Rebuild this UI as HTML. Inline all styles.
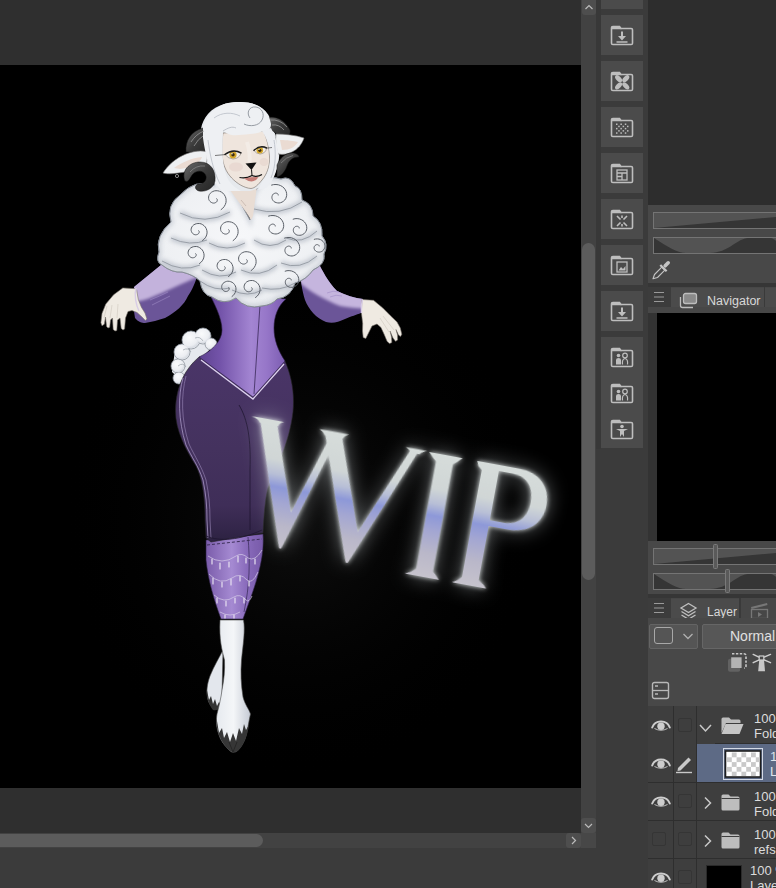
<!DOCTYPE html>
<html><head><meta charset="utf-8">
<style>
html,body{margin:0;padding:0;}
body{width:776px;height:888px;overflow:hidden;position:relative;background:#3b3b3b;font-family:"Liberation Sans",sans-serif;}
.a{position:absolute;}
</style></head><body>
<div class="a" style="left:0;top:0;width:581px;height:833px;background:#2f2f2f;"></div>
<div class="a" style="left:0;top:65px;width:581px;height:723px;background:#000;overflow:hidden;">
<svg class="a" style="left:0;top:-65px" width="581" height="888" viewBox="0 0 581 888">
<defs>
 <linearGradient id="gCorset" x1="0" y1="0" x2="1" y2="0">
  <stop offset="0" stop-color="#5e4290"/><stop offset="0.25" stop-color="#7454aa"/><stop offset="0.6" stop-color="#a385d2"/><stop offset="0.78" stop-color="#9676c8"/><stop offset="1" stop-color="#7a5bb0"/>
 </linearGradient>
 <linearGradient id="gPants" x1="0" y1="0" x2="0" y2="1">
  <stop offset="0" stop-color="#4a3568"/><stop offset="0.5" stop-color="#44325e"/><stop offset="0.8" stop-color="#3f2e58"/><stop offset="0.93" stop-color="#33264a"/><stop offset="1" stop-color="#2c2140"/>
 </linearGradient>
 <linearGradient id="gLeg" x1="0" y1="0" x2="1" y2="0">
  <stop offset="0" stop-color="#7a5caa"/><stop offset="0.45" stop-color="#a58ad2"/><stop offset="0.7" stop-color="#8a6cbc"/><stop offset="1" stop-color="#7658a8"/>
 </linearGradient>
 <linearGradient id="gHoof" x1="0" y1="0" x2="1" y2="0">
  <stop offset="0" stop-color="#e6eaef"/><stop offset="0.5" stop-color="#f4f6f8"/><stop offset="1" stop-color="#c5cad4"/>
 </linearGradient>
 <linearGradient id="gHorn" x1="0" y1="0" x2="1" y2="1">
  <stop offset="0" stop-color="#6a6a6a"/><stop offset="0.5" stop-color="#3a3a3a"/><stop offset="1" stop-color="#252525"/>
 </linearGradient>
 <radialGradient id="gBg1" cx="0.5" cy="0.5" r="0.5">
  <stop offset="0" stop-color="#141414"/><stop offset="1" stop-color="#000" stop-opacity="0"/>
 </radialGradient>
 <linearGradient id="gText" gradientUnits="userSpaceOnUse" x1="0" y1="-5" x2="0" y2="119">
  <stop offset="0" stop-color="#d6dcda"/><stop offset="0.28" stop-color="#d0d6d6"/><stop offset="0.4" stop-color="#b8bfd6"/><stop offset="0.5" stop-color="#8d98d8"/><stop offset="0.62" stop-color="#a3a6d2"/><stop offset="0.8" stop-color="#b9b7c9"/><stop offset="1" stop-color="#c6c3cc"/>
 </linearGradient>
 <filter id="glow" x="-30%" y="-30%" width="160%" height="160%">
  <feGaussianBlur in="SourceAlpha" stdDeviation="2.5" result="b1"/>
  <feFlood flood-color="#eef4f4" flood-opacity="0.9"/><feComposite in2="b1" operator="in" result="g1"/>
  <feGaussianBlur in="SourceAlpha" stdDeviation="10" result="b2"/>
  <feFlood flood-color="#d0d8dc" flood-opacity="0.55"/><feComposite in2="b2" operator="in" result="g2"/>
  <feMerge><feMergeNode in="g2"/><feMergeNode in="g1"/><feMergeNode in="SourceGraphic"/></feMerge>
 </filter>
</defs>
<ellipse cx="300" cy="520" rx="240" ry="260" fill="url(#gBg1)" opacity="0.7"/>

<!-- back leg -->
<path d="M223 650 C219 658 214 666 210 676 C207 684 206 692 208 700 C210 706 214 710 218 709 C221 707 222 702 222 695 Z" fill="#e3e7ed" stroke="#4a4a4a" stroke-width="0.6"/>
<path d="M206.5 688 C206 697 209 705 213 710 C217 711 220 709 221.5 705 L219 702 L217 706 L215 699 L213 704 L211 696 L209 700 Z" fill="#333"/>
<!-- tail -->
<radialGradient id="gTail" cx="0.4" cy="0.35" r="0.7"><stop offset="0" stop-color="#fafbfc"/><stop offset="0.7" stop-color="#eceef2"/><stop offset="1" stop-color="#cfd4dc"/></radialGradient>
<path d="M175 350 L200 332 L214 345 L200 360 L185 384 L172 372 Z" fill="#e6e9ee"/>
<circle cx="182" cy="352" r="8" fill="#e9ecf0" stroke="#8a9099" stroke-width="0.8"/><circle cx="191" cy="340" r="9" fill="#e9ecf0" stroke="#8a9099" stroke-width="0.8"/><circle cx="203" cy="336" r="8" fill="#e9ecf0" stroke="#8a9099" stroke-width="0.8"/><circle cx="211" cy="344" r="6" fill="#e9ecf0" stroke="#8a9099" stroke-width="0.8"/><circle cx="178" cy="366" r="7" fill="#e9ecf0" stroke="#8a9099" stroke-width="0.8"/><circle cx="179" cy="378" r="6" fill="#e9ecf0" stroke="#8a9099" stroke-width="0.8"/><circle cx="182" cy="352" r="7.2" fill="url(#gTail)"/><circle cx="191" cy="340" r="8.2" fill="url(#gTail)"/><circle cx="203" cy="336" r="7.2" fill="url(#gTail)"/><circle cx="211" cy="344" r="5.2" fill="url(#gTail)"/><circle cx="178" cy="366" r="6.2" fill="url(#gTail)"/><circle cx="179" cy="378" r="5.2" fill="url(#gTail)"/>
<path d="M183 350 Q188 347 191 352 M178 366 Q183 362 186 367 M195 338 Q200 336 203 341" fill="none" stroke="#9aa0a8" stroke-width="0.7"/>
<!-- leggings -->
<path d="M206 540 L263 534 C264 548 262 560 258 575 C254 590 248 605 243 619 L221 619 C214 600 208 580 206 560 Z" fill="url(#gLeg)" stroke="#2a2040" stroke-width="0.6"/>
<path d="M248 537 C250 560 250 585 244 612" fill="none" stroke="#3e3060" stroke-width="0.8"/>
<path d="M207 545 L262 539" stroke="#3c2e58" stroke-width="1" stroke-dasharray="3 2"/>
<g fill="none" stroke="#d6cce8" stroke-width="0.7">
<path d="M208 556 Q222 566 236 556 Q242 552 248 558 Q255 562 262 550"/>
<path d="M209 574 Q220 586 232 578 Q240 572 247 580 Q252 585 258 572"/>
<path d="M214 595 Q224 604 234 597 Q240 593 246 600 Q249 603 252 596"/>
<path d="M220 612 Q230 618 240 612"/>
</g>
<g stroke="#e6e0f0" stroke-width="1.2" stroke-linecap="round">
<path d="M212 559 v5 M220 563 v6 M229 562 v5 M238 556 v6 M246 558 v5 M255 559 v5 M213 578 v6 M222 582 v5 M231 579 v6 M240 576 v5 M249 581 v5 M217 598 v5 M226 601 v5 M235 598 v5 M244 598 v5 M225 615 v3 M234 615 v3"/>
</g>
<!-- front leg -->
<path d="M220 620 L243.5 620 C245.5 630 243 645 241.5 660 C240.5 672 241 685 243 697 C245 705 249 709 250.5 714 C249 720 248 728 246 736 C244 743 240 749 235.5 752 L231.5 752 C227 748 221 742 219 735 C216 727 216 720 217 714 C219 706 221 698 222 690 C224 680 225 670 224.5 660 C222 650 219 640 220 620 Z" fill="url(#gHoof)" stroke="#4a4a4a" stroke-width="0.6"/>
<path d="M216.5 718 C216 730 220 742 229 750 L233 753 L238 751 C243 746 247 738 249 725 L246 730 L244 724 L242 734 L239 728 L236 741 L233 733 L230 742 L227 732 L224 738 L222 728 L219 733 Z" fill="#363636"/>
<path d="M229 742 L233 752 L237 742" fill="none" stroke="#222" stroke-width="0.8"/>
<!-- pants -->
<path d="M199 357 C186 368 176 385 175.5 410 C175 430 186 450 196 466 C203 480 205 500 205 520 L206 538 L211 542 L263 533 C264 515 265 500 268 488 C276 470 290 440 293 412 C295 392 291 375 285 361 Z" fill="url(#gPants)" stroke="#222" stroke-width="0.6"/>
<path d="M183 378 C178 395 178 420 186 445 C192 458 198 465 203 480 C206 495 207 505 207 520 L208 538" fill="none" stroke="#b8a8d4" stroke-width="0.7"/><path d="M186 376 C181 395 181 420 189 444 C195 457 201 465 206 480 C209 495 210 505 210 520 L211 538" fill="none" stroke="#9c8abb" stroke-width="0.6"/>
<path d="M239 405 C248 420 251 440 250 470 L250 530" fill="none" stroke="#1e1530" stroke-width="0.8"/>
<path d="M206 536 C220 542 240 540 262 530" fill="none" stroke="#1e1530" stroke-width="0.8"/>
<!-- corset -->
<path d="M208 291 C214 303 222 318 222 330 C222 342 210 352 199 357 L253 397 L285 361 C278 350 274 340 274 328 C274 316 278 306 286 299 Z" fill="url(#gCorset)" stroke="#2a1d40" stroke-width="0.6"/>
<path d="M201 360 L253 399 L284 364" fill="none" stroke="#ddd2ee" stroke-width="1.3"/>
<path d="M260 305 L254 394" stroke="#3a2a58" stroke-width="0.8"/>
<!-- left sleeve -->
<filter id="fSl" x="-20%" y="-20%" width="140%" height="140%"><feGaussianBlur stdDeviation="1.6"/></filter>
<clipPath id="cSlL"><path d="M176 257 L161 265 L134 287 C133 298 133 308 135 318 C138 322 142 323 145 323 C152 322 158 320 165 318 C176 312 184 305 188 296 C192 290 196 282 198 272 Z"/></clipPath>
<clipPath id="cSlR"><path d="M300 260 L318 262 C322 270 328 282 337 291 C345 295 355 298 363 299 L361 313 C356 315 352 316 345 319 C338 322 333 324 326 322 C316 318 309 310 305 300 C302 290 300 280 300 260 Z"/></clipPath>
<path d="M176 257 L161 265 L134 287 C133 298 133 308 135 318 C138 322 142 323 145 323 C152 322 158 320 165 318 C176 312 184 305 188 296 C192 290 196 282 198 272 Z" fill="#6b5598"/>
<g clip-path="url(#cSlL)"><path d="M110 240 L200 240 L200 276 C185 282 165 292 150 298 C145 300 140 301 130 303 Z" fill="#c3b2dc" filter="url(#fSl)"/></g>
<path d="M150 300 Q160 296 168 292 M152 305 Q162 300 170 296" fill="none" stroke="#a08cc6" stroke-width="0.6"/>
<!-- right sleeve -->
<path d="M300 260 L318 262 C322 270 328 282 337 291 C345 295 355 298 363 299 L361 313 C356 315 352 316 345 319 C338 322 333 324 326 322 C316 318 309 310 305 300 C302 290 300 280 300 260 Z" fill="#6b5598"/>
<g clip-path="url(#cSlR)"><path d="M290 240 L380 240 L380 307 C370 309 355 309 340 306 C325 300 310 292 296 280 Z" fill="#c5b5de" filter="url(#fSl)"/></g>
<path d="M327 293 Q333 290 339 292 M330 297 Q336 294 342 296" fill="none" stroke="#a08cc6" stroke-width="0.6"/>
<!-- hands -->
<path d="M135.2 288.7 L122.8 287.9 L113.6 294.8 L105.8 304.1 L102.0 313.4 L100.9 322.7 L102.0 325.8 L104.3 324.2 L105.5 317.0 L106.6 326.5 L108.0 328.0 L109.7 327.3 L110.5 320.0 L112.5 318.0 L113.2 329.5 L115.0 331.0 L116.8 330.5 L117.5 320.0 L120.0 318.0 L121.2 328.5 L123.0 330.0 L124.6 329.0 L125.5 318.0 L128.0 311.5 L132.0 310.5 L137.0 312.5 L142.0 317.0 L145.3 320.4 L147.0 319.0 L145.0 313.0 L141.4 307.2 L138.3 299.5 L136.7 290.2 Z" fill="#efeae2" stroke="#7a736d" stroke-width="0.6" stroke-linejoin="round"/>
<path d="M107 306 L104 318 M112 305 L110 318 M118 304 L117 318" stroke="#cfc7bd" stroke-width="0.6"/>
<path d="M136 288 C134 295 136 305 139 311" fill="none" stroke="#d8cce6" stroke-width="1.4"/>
<path d="M361.9 299.5 L373.5 300.3 L382.8 308.0 L390.5 315.8 L397.0 322.0 L400.3 328.0 L401.8 334.3 L400.5 336.6 L398.5 335.0 L396.0 329.5 L397.5 335.0 L397.6 340.0 L395.5 341.3 L393.0 338.0 L390.0 331.0 L391.5 337.0 L391.8 342.6 L389.5 343.6 L387.2 341.5 L384.0 334.0 L381.0 327.5 L377.0 324.0 L372.0 326.0 L368.5 333.0 L365.8 338.5 L363.2 337.5 L362.5 331.0 L362.7 323.5 L361.4 312.7 Z" fill="#efeae2" stroke="#7a736d" stroke-width="0.6" stroke-linejoin="round"/>
<path d="M383 316 L394 330 M380 318 L389 332" stroke="#cfc7bd" stroke-width="0.6"/>
<path d="M362.5 299.5 C361 305 361 308 361.5 313" fill="none" stroke="#d8cce6" stroke-width="1.4"/>
<g id="wool"><filter id="fSoft" x="-20%" y="-50%" width="140%" height="200%"><feGaussianBlur stdDeviation="2"/></filter>
<radialGradient id="gWoolBase" cx="0.5" cy="0.45" r="0.6"><stop offset="0" stop-color="#f6f7f9"/><stop offset="0.8" stop-color="#eef0f3"/><stop offset="1" stop-color="#dde1e7"/></radialGradient>
<path d="M212 186 Q196 178 180 195 Q166 205 171 222 Q155 236 159 252 Q155 262 162 265 Q172 273 182 272 Q194 275 200 281 Q202 295 212 297 Q224 306 236 298 Q246 310 262 306 Q272 305 277 299 Q291 297 295 283 Q306 280 313 270 Q326 264 324 254 Q329 244 322 236 Q323 222 313 216 Q313 204 302 200 Q302 188 295 186 Q290 175 281 179 Q268 175 261 182 L254 193 L250 220 L229 182 Q222 180 212 186 Z" fill="url(#gWoolBase)" stroke="#7f858e" stroke-width="0.8"/>
<clipPath id="cWool"><path d="M212 186 Q196 178 180 195 Q166 205 171 222 Q155 236 159 252 Q155 262 162 265 Q172 273 182 272 Q194 275 200 281 Q202 295 212 297 Q224 306 236 298 Q246 310 262 306 Q272 305 277 299 Q291 297 295 283 Q306 280 313 270 Q326 264 324 254 Q329 244 322 236 Q323 222 313 216 Q313 204 302 200 Q302 188 295 186 Q290 175 281 179 Q268 175 261 182 L254 193 L250 220 L229 182 Q222 180 212 186 Z"/></clipPath><g clip-path="url(#cWool)"><g filter="url(#fSoft)" opacity="0.75">
<path d="M180 213 Q205 226 230 212" fill="none" stroke="#b4bac4" stroke-width="5"/>
<path d="M254 209 Q280 217 302 202" fill="none" stroke="#b4bac4" stroke-width="5"/>
<path d="M171 238 Q190 247 207 240" fill="none" stroke="#b4bac4" stroke-width="5"/>
<path d="M209 243 Q227 253 245 243" fill="none" stroke="#b4bac4" stroke-width="5"/>
<path d="M254 240 Q270 251 286 240" fill="none" stroke="#b4bac4" stroke-width="5"/>
<path d="M286 238 Q302 245 317 231" fill="none" stroke="#b4bac4" stroke-width="5"/>
<path d="M162 261 Q182 273 200 265" fill="none" stroke="#b4bac4" stroke-width="5"/>
<path d="M202 270 Q220 281 236 272" fill="none" stroke="#b4bac4" stroke-width="5"/>
<path d="M241 270 Q260 279 277 265" fill="none" stroke="#b4bac4" stroke-width="5"/>
<path d="M281 263 Q300 271 317 256" fill="none" stroke="#b4bac4" stroke-width="5"/>
<path d="M200 281 Q215 292 230 288" fill="none" stroke="#b4bac4" stroke-width="5"/>
<path d="M232 290 Q248 298 262 290" fill="none" stroke="#b4bac4" stroke-width="5"/>
<path d="M262 288 Q280 292 295 283" fill="none" stroke="#b4bac4" stroke-width="5"/>
<path d="M212 186 Q196 178 180 195 Q166 205 171 222 Q155 236 159 252 Q155 262 162 265 Q172 273 182 272 Q194 275 200 281 Q202 295 212 297 Q224 306 236 298 Q246 310 262 306 Q272 305 277 299 Q291 297 295 283 Q306 280 313 270 Q326 264 324 254 Q329 244 322 236 Q323 222 313 216 Q313 204 302 200 Q302 188 295 186 Q290 175 281 179 Q268 175 261 182 L254 193 L250 220 L229 182 Q222 180 212 186 Z" fill="none" stroke="#c4c9d1" stroke-width="5"/>
</g></g>
<path d="M212 186 Q196 178 180 195 Q166 205 171 222 Q155 236 159 252 Q155 262 162 265 Q172 273 182 272 Q194 275 200 281 Q202 295 212 297 Q224 306 236 298 Q246 310 262 306 Q272 305 277 299 Q291 297 295 283 Q306 280 313 270 Q326 264 324 254 Q329 244 322 236 Q323 222 313 216 Q313 204 302 200 Q302 188 295 186 Q290 175 281 179 Q268 175 261 182 L254 193 L250 220 L229 182 Q222 180 212 186 Z" fill="none" stroke="#80868f" stroke-width="0.8"/>
<path d="M180 213 Q205 226 230 212" fill="none" stroke="#8c929b" stroke-width="0.8"/>
<path d="M254 209 Q280 217 302 202" fill="none" stroke="#8c929b" stroke-width="0.8"/>
<path d="M171 238 Q190 247 207 240" fill="none" stroke="#8c929b" stroke-width="0.8"/>
<path d="M209 243 Q227 253 245 243" fill="none" stroke="#8c929b" stroke-width="0.8"/>
<path d="M254 240 Q270 251 286 240" fill="none" stroke="#8c929b" stroke-width="0.8"/>
<path d="M286 238 Q302 245 317 231" fill="none" stroke="#8c929b" stroke-width="0.8"/>
<path d="M162 261 Q182 273 200 265" fill="none" stroke="#8c929b" stroke-width="0.8"/>
<path d="M202 270 Q220 281 236 272" fill="none" stroke="#8c929b" stroke-width="0.8"/>
<path d="M241 270 Q260 279 277 265" fill="none" stroke="#8c929b" stroke-width="0.8"/>
<path d="M281 263 Q300 271 317 256" fill="none" stroke="#8c929b" stroke-width="0.8"/>
<path d="M200 281 Q215 292 230 288" fill="none" stroke="#8c929b" stroke-width="0.8"/>
<path d="M232 290 Q248 298 262 290" fill="none" stroke="#8c929b" stroke-width="0.8"/>
<path d="M262 288 Q280 292 295 283" fill="none" stroke="#8c929b" stroke-width="0.8"/>
<path d="M216.3 198.4 L216.6 198.6 L216.9 198.9 L217.1 199.2 L217.3 199.7 L217.3 200.2 L217.2 200.8 L217.0 201.4 L216.6 201.9 L216.0 202.4 L215.3 202.7 L214.5 203.0 L213.6 203.1 L212.7 203.0 L211.7 202.6 L210.8 202.1 L210.0 201.4 L209.3 200.5 L208.8 199.5 L208.6 198.3 L208.6 197.0 L208.9 195.7 L209.4 194.5 L210.3 193.3 L211.4 192.3 L212.8 191.5 L214.3 190.9 L216.0 190.7 L217.8 190.8 L219.6 191.2 L221.3 192.0 L222.9 193.1 L224.2 194.6 L225.2 196.3 L225.9 198.2 L226.1 200.3 L226.0 202.4 L225.3 204.5 L224.2 206.5 L222.7 208.3 L220.8 209.8" fill="none" stroke="#5a5f67" stroke-width="1"/>
<path d="M278.3 195.4 L278.3 195.0 L278.2 194.6 L278.1 194.2 L277.7 193.8 L277.3 193.5 L276.8 193.3 L276.1 193.1 L275.4 193.1 L274.7 193.3 L274.0 193.6 L273.3 194.0 L272.7 194.7 L272.3 195.5 L272.0 196.4 L271.9 197.4 L272.0 198.4 L272.4 199.5 L273.0 200.5 L273.8 201.4 L274.9 202.1 L276.2 202.6 L277.6 202.9 L279.1 203.0 L280.6 202.7 L282.1 202.1 L283.5 201.2 L284.7 200.1 L285.7 198.7 L286.3 197.0 L286.7 195.3 L286.6 193.4 L286.2 191.6 L285.3 189.8 L284.1 188.1 L282.5 186.7 L280.6 185.6 L278.4 184.8 L276.0 184.5 L273.6 184.6 L271.2 185.2" fill="none" stroke="#5a5f67" stroke-width="1"/>
<path d="M198.3 230.4 L198.6 230.6 L198.9 230.9 L199.1 231.2 L199.2 231.7 L199.2 232.2 L199.1 232.7 L198.8 233.2 L198.5 233.7 L197.9 234.1 L197.3 234.5 L196.5 234.7 L195.7 234.8 L194.8 234.7 L194.0 234.4 L193.2 233.9 L192.4 233.2 L191.8 232.4 L191.4 231.4 L191.1 230.3 L191.1 229.2 L191.4 228.0 L191.9 226.9 L192.7 225.8 L193.7 224.9 L195.0 224.2 L196.4 223.7 L197.9 223.5 L199.6 223.5 L201.2 223.9 L202.7 224.7 L204.1 225.7 L205.3 227.0 L206.2 228.5 L206.8 230.3 L207.1 232.1 L206.9 234.1 L206.3 236.0 L205.3 237.8 L203.9 239.4 L202.2 240.7" fill="none" stroke="#5a5f67" stroke-width="1"/>
<path d="M228.3 229.4 L228.6 229.6 L228.9 229.9 L229.1 230.2 L229.3 230.7 L229.3 231.2 L229.2 231.8 L229.0 232.4 L228.6 232.9 L228.0 233.4 L227.3 233.7 L226.5 234.0 L225.6 234.1 L224.7 234.0 L223.7 233.6 L222.8 233.1 L222.0 232.4 L221.3 231.5 L220.8 230.5 L220.6 229.3 L220.6 228.0 L220.9 226.7 L221.4 225.5 L222.3 224.3 L223.4 223.3 L224.8 222.5 L226.3 221.9 L228.0 221.7 L229.8 221.8 L231.6 222.2 L233.3 223.0 L234.9 224.1 L236.2 225.6 L237.2 227.3 L237.9 229.2 L238.1 231.3 L238.0 233.4 L237.3 235.5 L236.2 237.5 L234.7 239.3 L232.8 240.8" fill="none" stroke="#5a5f67" stroke-width="1"/>
<path d="M275.3 226.4 L275.3 226.0 L275.2 225.6 L275.1 225.2 L274.7 224.8 L274.3 224.5 L273.8 224.3 L273.1 224.1 L272.4 224.1 L271.7 224.3 L271.0 224.6 L270.3 225.0 L269.7 225.7 L269.3 226.5 L269.0 227.4 L268.9 228.4 L269.0 229.4 L269.4 230.5 L270.0 231.5 L270.8 232.4 L271.9 233.1 L273.2 233.6 L274.6 233.9 L276.1 234.0 L277.6 233.7 L279.1 233.1 L280.5 232.2 L281.7 231.1 L282.7 229.7 L283.3 228.0 L283.7 226.3 L283.6 224.4 L283.2 222.6 L282.3 220.8 L281.1 219.1 L279.5 217.7 L277.6 216.6 L275.4 215.8 L273.0 215.5 L270.6 215.6 L268.2 216.2" fill="none" stroke="#5a5f67" stroke-width="1"/>
<path d="M299.3 228.4 L299.3 228.0 L299.2 227.6 L299.0 227.3 L298.7 226.9 L298.3 226.6 L297.8 226.4 L297.2 226.3 L296.5 226.3 L295.9 226.4 L295.2 226.7 L294.6 227.2 L294.0 227.8 L293.6 228.5 L293.4 229.3 L293.3 230.3 L293.4 231.2 L293.8 232.2 L294.3 233.1 L295.1 233.9 L296.1 234.6 L297.2 235.1 L298.5 235.3 L299.9 235.3 L301.3 235.1 L302.6 234.6 L303.9 233.8 L305.0 232.7 L305.9 231.4 L306.5 230.0 L306.8 228.3 L306.7 226.7 L306.3 225.0 L305.5 223.4 L304.4 221.9 L303.0 220.6 L301.2 219.6 L299.3 218.9 L297.1 218.6 L295.0 218.7 L292.8 219.3" fill="none" stroke="#5a5f67" stroke-width="1"/>
<path d="M195.3 253.4 L195.6 253.6 L195.9 253.9 L196.1 254.2 L196.2 254.7 L196.2 255.2 L196.1 255.7 L195.8 256.2 L195.5 256.7 L194.9 257.1 L194.3 257.5 L193.5 257.7 L192.7 257.8 L191.8 257.7 L191.0 257.4 L190.2 256.9 L189.4 256.2 L188.8 255.4 L188.4 254.4 L188.1 253.3 L188.1 252.2 L188.4 251.0 L188.9 249.9 L189.7 248.8 L190.7 247.9 L192.0 247.2 L193.4 246.7 L194.9 246.5 L196.6 246.5 L198.2 246.9 L199.7 247.7 L201.1 248.7 L202.3 250.0 L203.2 251.5 L203.8 253.3 L204.1 255.1 L203.9 257.1 L203.3 259.0 L202.3 260.8 L200.9 262.4 L199.2 263.7" fill="none" stroke="#5a5f67" stroke-width="1"/>
<path d="M246.3 259.4 L246.6 259.6 L246.9 259.9 L247.1 260.2 L247.3 260.7 L247.3 261.2 L247.2 261.8 L247.0 262.4 L246.6 262.9 L246.0 263.4 L245.3 263.7 L244.5 264.0 L243.6 264.1 L242.7 264.0 L241.7 263.6 L240.8 263.1 L240.0 262.4 L239.3 261.5 L238.8 260.5 L238.6 259.3 L238.6 258.0 L238.9 256.7 L239.4 255.5 L240.3 254.3 L241.4 253.3 L242.8 252.5 L244.3 251.9 L246.0 251.7 L247.8 251.8 L249.6 252.2 L251.3 253.0 L252.9 254.1 L254.2 255.6 L255.2 257.3 L255.9 259.2 L256.1 261.3 L256.0 263.4 L255.3 265.5 L254.2 267.5 L252.7 269.3 L250.8 270.8" fill="none" stroke="#5a5f67" stroke-width="1"/>
<path d="M291.3 248.4 L291.3 248.0 L291.2 247.6 L291.1 247.2 L290.7 246.8 L290.3 246.5 L289.8 246.3 L289.1 246.1 L288.4 246.1 L287.7 246.3 L287.0 246.6 L286.3 247.0 L285.7 247.7 L285.3 248.5 L285.0 249.4 L284.9 250.4 L285.0 251.4 L285.4 252.5 L286.0 253.5 L286.8 254.4 L287.9 255.1 L289.2 255.6 L290.6 255.9 L292.1 256.0 L293.6 255.7 L295.1 255.1 L296.5 254.2 L297.7 253.1 L298.7 251.7 L299.3 250.0 L299.7 248.3 L299.6 246.4 L299.2 244.6 L298.3 242.8 L297.1 241.1 L295.5 239.7 L293.6 238.6 L291.4 237.8 L289.0 237.5 L286.6 237.6 L284.2 238.2" fill="none" stroke="#5a5f67" stroke-width="1"/>
<path d="M319.3 246.4 L319.3 246.0 L319.2 245.7 L318.9 245.4 L318.6 245.1 L318.3 244.9 L317.8 244.7 L317.3 244.6 L316.7 244.6 L316.2 244.8 L315.6 245.1 L315.1 245.5 L314.7 246.0 L314.3 246.6 L314.1 247.3 L314.1 248.0 L314.2 248.8 L314.5 249.6 L315.0 250.3 L315.7 251.0 L316.5 251.5 L317.4 251.9 L318.4 252.1 L319.5 252.1 L320.6 251.9 L321.7 251.5 L322.7 250.8 L323.6 250.0 L324.2 248.9 L324.7 247.8 L324.9 246.5 L324.9 245.2 L324.6 243.8 L323.9 242.5 L323.0 241.4 L321.9 240.4 L320.5 239.6 L319.0 239.1 L317.3 238.9 L315.6 239.0 L313.9 239.4" fill="none" stroke="#5a5f67" stroke-width="1"/>
<path d="M224.3 266.4 L224.6 266.6 L224.9 266.9 L225.1 267.2 L225.2 267.7 L225.2 268.2 L225.1 268.7 L224.8 269.2 L224.5 269.7 L223.9 270.1 L223.3 270.5 L222.5 270.7 L221.7 270.8 L220.8 270.7 L220.0 270.4 L219.2 269.9 L218.4 269.2 L217.8 268.4 L217.4 267.4 L217.1 266.3 L217.1 265.2 L217.4 264.0 L217.9 262.9 L218.7 261.8 L219.7 260.9 L221.0 260.2 L222.4 259.7 L223.9 259.5 L225.6 259.5 L227.2 259.9 L228.7 260.7 L230.1 261.7 L231.3 263.0 L232.2 264.5 L232.8 266.3 L233.1 268.1 L232.9 270.1 L232.3 272.0 L231.3 273.8 L229.9 275.4 L228.2 276.7" fill="none" stroke="#5a5f67" stroke-width="1"/>
<path d="M228.3 287.4 L228.6 287.6 L228.8 287.9 L229.0 288.2 L229.1 288.6 L229.1 289.1 L229.0 289.6 L228.7 290.1 L228.4 290.5 L227.9 290.9 L227.3 291.2 L226.6 291.4 L225.8 291.5 L225.0 291.3 L224.2 291.1 L223.5 290.6 L222.8 290.0 L222.3 289.3 L221.9 288.4 L221.7 287.4 L221.7 286.4 L221.9 285.3 L222.4 284.3 L223.1 283.3 L224.1 282.5 L225.2 281.9 L226.5 281.4 L227.8 281.2 L229.3 281.3 L230.7 281.7 L232.1 282.3 L233.4 283.2 L234.4 284.4 L235.3 285.8 L235.8 287.3 L236.0 289.0 L235.8 290.7 L235.3 292.4 L234.4 294.0 L233.2 295.5 L231.7 296.7" fill="none" stroke="#5a5f67" stroke-width="1"/>
<path d="M251.3 287.4 L251.6 287.6 L251.9 287.9 L252.1 288.2 L252.2 288.7 L252.2 289.2 L252.1 289.7 L251.8 290.2 L251.5 290.7 L250.9 291.1 L250.3 291.5 L249.5 291.7 L248.7 291.8 L247.8 291.7 L247.0 291.4 L246.2 290.9 L245.4 290.2 L244.8 289.4 L244.4 288.4 L244.1 287.3 L244.1 286.2 L244.4 285.0 L244.9 283.9 L245.7 282.8 L246.7 281.9 L248.0 281.2 L249.4 280.7 L250.9 280.5 L252.6 280.5 L254.2 280.9 L255.7 281.7 L257.1 282.7 L258.3 284.0 L259.2 285.5 L259.8 287.3 L260.1 289.1 L259.9 291.1 L259.3 293.0 L258.3 294.8 L256.9 296.4 L255.2 297.7" fill="none" stroke="#5a5f67" stroke-width="1"/>
<path d="M291.3 280.4 L291.3 280.0 L291.2 279.6 L291.0 279.3 L290.7 278.9 L290.3 278.6 L289.8 278.4 L289.2 278.3 L288.5 278.3 L287.9 278.4 L287.2 278.7 L286.6 279.2 L286.0 279.8 L285.6 280.5 L285.4 281.3 L285.3 282.3 L285.4 283.2 L285.8 284.2 L286.3 285.1 L287.1 285.9 L288.1 286.6 L289.2 287.1 L290.5 287.3 L291.9 287.3 L293.3 287.1 L294.6 286.6 L295.9 285.8 L297.0 284.7 L297.9 283.4 L298.5 282.0 L298.8 280.3 L298.7 278.7 L298.3 277.0 L297.5 275.4 L296.4 273.9 L295.0 272.6 L293.2 271.6 L291.3 270.9 L289.1 270.6 L287.0 270.7 L284.8 271.3" fill="none" stroke="#5a5f67" stroke-width="1"/>
<!-- neck -->
<path d="M227 186 L257 186 L253 216 L251 220 L246 212 Z" fill="#e9ddd4"/>
<path d="M241 200 L246 206" stroke="#b8a8a0" stroke-width="0.6"/>
<!-- hair back / side -->
<path d="M201 129 C203 118 210 108 225.6 103.6 C235 101.5 250 101 258.7 106 C264 109 268 113 270 118 C272 124 273 130 275.8 135.4 C278 142 280 150 279 158 C278 168 275 176 268 182 C262 186 255 190 250 191 L220 191 C214 185 210 176 207 166 C204 156 202 146 201 138 Z" fill="#e6e9ed"/>
<!-- horns upper -->
<path d="M186 152 C185 141 191 131 203 128 C208 128 211 132 210 138 C209 144 207 150 205 153 Z" fill="url(#gHorn)" stroke="#111" stroke-width="0.5"/>
<path d="M266 118 C276 115 285 120 290 130 C291 134 288 138 283 138 L279 138 C276 132 271 129 267 130 Z" fill="url(#gHorn)" stroke="#111" stroke-width="0.5"/>
<!-- ears -->
<path d="M163 173 C168 165 176 158 186 154 C194 151 202 150 207 152 C208 158 207 163 204 166 C197 170 188 172 178 173 C172 174 166 174 163 173 Z" fill="#eef0f2" stroke="#777" stroke-width="0.6"/>
<path d="M174 168 C182 162 192 158 202 157 C200 163 192 167 180 169 Z" fill="#eadbd2"/>
<path d="M276 134 C285 134 295 135 304 138 C302 144 298 149 292 152 C288 154 283 155 278 154 C276 148 275 140 276 134 Z" fill="#eef0f2" stroke="#777" stroke-width="0.6"/>
<path d="M280 140 C287 140 294 141 298 142 C295 147 290 150 282 150 Z" fill="#eadbd2"/>
<!-- face -->
<path d="M223 133 L263.6 131 C267 139 269.5 148 269.7 159 C269.5 167 267 174 262 180 C258 185 255 188 251 188.5 C244 188 237 183.5 231.7 178 C226 172 223 165 222 155 C221.5 147 222 139 223 133 Z" fill="#efe5dd" stroke="#6e6660" stroke-width="0.6"/>
<ellipse cx="236" cy="167" rx="7" ry="4.5" fill="#e4cfc8" opacity="0.55"/>
<ellipse cx="264" cy="162" rx="4.5" ry="4" fill="#e4cfc8" opacity="0.5"/>
<path d="M247 142 C249.5 150 250 157 249.5 162" fill="none" stroke="#f5f0ea" stroke-width="4" opacity="0.7"/>
<!-- bangs -->
<path d="M203 127 C207 114 216 106 228 103 C240 101 252 102 260 107 C266 111 270 117 271 124 C271 129 268 131 263 131 C258 133 254 134 250 134 C242 135 236 135.5 231.7 135 C228 134 225 132.5 223 131 C223 140 222 150 223 160 C224 170 226 176 229 181 C233 186 237 189 241 191 L222 191 C216 185 212 176 209 166 C206 156 204 146 203 138 Z" fill="#eef0f3"/>
<path d="M262 131 C267 138 270 148 270 158 C270 168 267 176 262 182 L258 190 L266 188 C273 182 277 172 278 160 C279 148 276 138 271 128 Z" fill="#eceef2"/>
<path d="M250 118 C246 113 249 106 256 107 C262 108 265 114 262 120 C259 126 250 127 244 124" fill="none" stroke="#8c929a" stroke-width="0.9"/>
<path d="M214 118 C222 112 232 112 240 116 M208 140 C210 155 213 170 220 184 M274 140 C276 152 276 166 271 178" fill="none" stroke="#b9bec6" stroke-width="0.8"/>
<path d="M223 131 C228 128 232 126 236 128" fill="none" stroke="#a9aeb6" stroke-width="0.7"/>
<!-- eyes -->
<path d="M215 155.5 L226 154.5" stroke="#444" stroke-width="0.7"/>
<path d="M225 154.5 Q233 148.5 241 153.5 Q239 158.5 233 159 Q228 158.5 225 154.5 Z" fill="#f4efe8" stroke="#6a625c" stroke-width="0.5"/>
<circle cx="233" cy="154.8" r="3.6" fill="#d2a629"/>
<circle cx="233" cy="154.8" r="1.7" fill="#3a2a10"/>
<circle cx="232" cy="153.8" r="0.7" fill="#fff"/>
<path d="M224.5 154.8 Q233 148 241.5 153.2" fill="none" stroke="#1c1c1c" stroke-width="1.4"/>
<path d="M264 148.5 L272 147.5" stroke="#444" stroke-width="0.7"/>
<path d="M254 150.5 Q260 145 266.5 148.5 Q265.5 153.5 260 154 Q256 153.5 254 150.5 Z" fill="#f4efe8" stroke="#6a625c" stroke-width="0.5"/>
<circle cx="259.8" cy="150.3" r="3.3" fill="#d2a629"/>
<circle cx="259.8" cy="150.3" r="1.6" fill="#3a2a10"/>
<circle cx="259" cy="149.4" r="0.6" fill="#fff"/>
<path d="M253.5 150.8 Q260 144.5 267 148.2" fill="none" stroke="#1c1c1c" stroke-width="1.4"/>
<!-- nose & mouth -->
<path d="M245.5 163.5 L256.5 162.5 L251.5 170 Z" fill="#111"/>
<path d="M251.5 169.5 L252 175.5" stroke="#111" stroke-width="1"/>
<path d="M239.5 177.5 Q246 179 252 175.5 Q257 177.5 262 174.5" fill="none" stroke="#111" stroke-width="1.2"/>
<path d="M244 178.5 Q252 176.8 258.5 177.2 Q253 185 244 178.5 Z" fill="#c47c76"/>
<!-- horns lower -->
<path d="M185 181 C181 171 189 162 200 162 C211 162 216 171 215 181 C213 189 206 192 199 191 C195 190 194 186 198 184 C203 184 207 181 206 176 C204 170 197 170 193 174 C190 177 189 183 185 181 Z" fill="url(#gHorn)" stroke="#111" stroke-width="0.5"/>
<path d="M277 165 C280 158 285 153 292 153 C296 153 299 155 299 157 C293 157 289 160 287 166 C285 172 281 176 277 177 Z" fill="url(#gHorn)" stroke="#111" stroke-width="0.5"/>
<circle cx="177" cy="176" r="1.6" fill="none" stroke="#bbb" stroke-width="0.7"/>
<path d="M191 142 Q196 134 204 131 M194 146 Q198 139 203 136" fill="none" stroke="#a0a0a0" stroke-width="0.9" opacity="0.8"/>
<path d="M270 120 Q280 119 287 127 M272 125 Q279 124 284 130" fill="none" stroke="#a0a0a0" stroke-width="0.9" opacity="0.8"/>
<path d="M190 172 Q196 165 205 166 M281 163 Q286 157 293 155.5" fill="none" stroke="#8a8a8a" stroke-width="0.9" opacity="0.8"/>
</g>
<!-- WIP -->
<g transform="translate(445,460) rotate(10.5)" filter="url(#glow)" fill="url(#gText)">
 <path d="M-188 -3 L-171 -3 L-141.9 79.8 L-116 -6 L-109 -6 L-145 117 L-147 117 Z M-122 -2.5 L-105 -2.5 L-72.7 86.7 L-35 -5 L-27 -5 L-77 119 L-79 119 Z M-198 -8 L-165 -8 Q-170 -6 -170 -3 L-189 -3 Q-190 -6 -198 -8 Z M-129 -7.5 L-99 -7.5 Q-104 -5 -104 -2.5 L-123 -2.5 Q-124 -5 -129 -7.5 Z M-41 -5.5 L-19 -5.5 Q-25 -3.5 -26 -1 L-35 -1 Q-36 -3.5 -41 -5.5 Z"/>
 <path d="M-17 -5 L17 -5 L12 0 L8.5 3 L8.5 112 L13 116 L16 119 L-19 119 L-13 116 L-8.5 112 L-8.5 3 L-12 0 Z"/>
 <path transform="translate(4,0)" d="M28 -5 L70 -5 C92 -5 104 8 104 26 C104 45 91 57 69 57 L51 57 L51 112 L57 116 L60 119 L25 119 L30 116 L34 112 L34 3 L30 0 Z M51 1 L51 51 L64 51 C80 51 88 41 88 26 C88 12 81 1 65 1 Z" fill-rule="evenodd"/>
</g>
</svg>

</div>
<div class="a" style="left:581px;top:0;width:15px;height:833px;background:#424242;"></div>
<div class="a" style="left:582px;top:0;width:14px;height:15px;background:#4e4e4e;border-radius:0 0 3px 3px;"></div>
<svg class="a" style="left:582px;top:0" width="14" height="15"><path d="M3.5 9 L7 5.5 L10.5 9" fill="none" stroke="#bbb" stroke-width="1.2"/></svg>
<div class="a" style="left:582px;top:243px;width:13px;height:337px;background:#5c5c5c;border-radius:7px;"></div>
<div class="a" style="left:581px;top:818px;width:15px;height:15px;background:#4e4e4e;border-radius:3px;"></div>
<svg class="a" style="left:581px;top:818px" width="15" height="15"><path d="M4 6 L7.5 9.5 L11 6" fill="none" stroke="#bbb" stroke-width="1.2"/></svg>
<div class="a" style="left:0;top:833px;width:596px;height:15px;background:#424242;"></div>
<div class="a" style="left:0;top:834px;width:263px;height:13px;background:#5c5c5c;border-radius:0 7px 7px 0;"></div>
<div class="a" style="left:566px;top:833px;width:15px;height:15px;background:#4e4e4e;border-radius:3px;"></div>
<svg class="a" style="left:566px;top:833px" width="15" height="15"><path d="M6 4 L9.5 7.5 L6 11" fill="none" stroke="#bbb" stroke-width="1.2"/></svg>
<div class="a" style="left:581px;top:833px;width:15px;height:15px;background:#474747;"></div>
<div class="a" style="left:596px;top:0;width:52px;height:888px;background:#3b3b3b;"></div>
<div class="a" style="left:596px;top:0;width:5px;height:449px;background:#383838;"></div>
<div class="a" style="left:601px;top:-31px;width:42px;height:40px;background:#4b4b4b;"></div>
<div class="a" style="left:601px;top:15px;width:42px;height:40px;background:#4b4b4b;"><svg width="26" height="22" viewBox="0 0 26 22" style="position:absolute;left:8px;top:9px"><path d="M2.5 3.8 Q2.5 2.5 3.8 2.5 L10.5 2.5 L12 4.5 L22.2 4.5 Q23.5 4.5 23.5 5.8 L23.5 19.2 Q23.5 20.5 22.2 20.5 L3.8 20.5 Q2.5 20.5 2.5 19.2 Z" fill="none" stroke="#bebebe" stroke-width="1.6"/><path d="M2.6 3.4 Q2.6 2.2 3.8 2.2 L10.3 2.2 L12.6 5.2 L2.6 5.2Z" fill="#bebebe"/><path d="M13 7.5 V14" stroke="#bebebe" stroke-width="2"/><path d="M9 12 L13 16.5 L17 12Z" fill="#bebebe"/><path d="M7.5 18 H18.5" stroke="#bebebe" stroke-width="1.5"/></svg></div>
<div class="a" style="left:601px;top:61px;width:42px;height:40px;background:#4b4b4b;"><svg width="26" height="22" viewBox="0 0 26 22" style="position:absolute;left:8px;top:9px"><path d="M2.5 3.8 Q2.5 2.5 3.8 2.5 L10.5 2.5 L12 4.5 L22.2 4.5 Q23.5 4.5 23.5 5.8 L23.5 19.2 Q23.5 20.5 22.2 20.5 L3.8 20.5 Q2.5 20.5 2.5 19.2 Z" fill="none" stroke="#bebebe" stroke-width="1.6"/><path d="M2.6 3.4 Q2.6 2.2 3.8 2.2 L10.3 2.2 L12.6 5.2 L2.6 5.2Z" fill="#bebebe"/><ellipse cx="16.80" cy="15.90" rx="4.3" ry="2.4" transform="rotate(45 16.80 15.90)" fill="#bebebe"/><ellipse cx="9.60" cy="8.70" rx="4.3" ry="2.4" transform="rotate(45 9.60 8.70)" fill="#bebebe"/><ellipse cx="16.80" cy="8.70" rx="4.3" ry="2.4" transform="rotate(-45 16.80 8.70)" fill="#bebebe"/><ellipse cx="9.60" cy="15.90" rx="4.3" ry="2.4" transform="rotate(-45 9.60 15.90)" fill="#bebebe"/></svg></div>
<div class="a" style="left:601px;top:107px;width:42px;height:40px;background:#4b4b4b;"><svg width="26" height="22" viewBox="0 0 26 22" style="position:absolute;left:8px;top:9px"><path d="M2.5 3.8 Q2.5 2.5 3.8 2.5 L10.5 2.5 L12 4.5 L22.2 4.5 Q23.5 4.5 23.5 5.8 L23.5 19.2 Q23.5 20.5 22.2 20.5 L3.8 20.5 Q2.5 20.5 2.5 19.2 Z" fill="none" stroke="#bebebe" stroke-width="1.6"/><path d="M2.6 3.4 Q2.6 2.2 3.8 2.2 L10.3 2.2 L12.6 5.2 L2.6 5.2Z" fill="#bebebe"/><rect x="7.0" y="7.5" width="1.5" height="1.5" fill="#bebebe"/><rect x="7.0" y="11.9" width="1.5" height="1.5" fill="#bebebe"/><rect x="7.0" y="16.3" width="1.5" height="1.5" fill="#bebebe"/><rect x="9.2" y="9.7" width="1.5" height="1.5" fill="#bebebe"/><rect x="9.2" y="14.100000000000001" width="1.5" height="1.5" fill="#bebebe"/><rect x="11.4" y="7.5" width="1.5" height="1.5" fill="#bebebe"/><rect x="11.4" y="11.9" width="1.5" height="1.5" fill="#bebebe"/><rect x="11.4" y="16.3" width="1.5" height="1.5" fill="#bebebe"/><rect x="13.600000000000001" y="9.7" width="1.5" height="1.5" fill="#bebebe"/><rect x="13.600000000000001" y="14.100000000000001" width="1.5" height="1.5" fill="#bebebe"/><rect x="15.8" y="7.5" width="1.5" height="1.5" fill="#bebebe"/><rect x="15.8" y="11.9" width="1.5" height="1.5" fill="#bebebe"/><rect x="15.8" y="16.3" width="1.5" height="1.5" fill="#bebebe"/><rect x="18.0" y="9.7" width="1.5" height="1.5" fill="#bebebe"/><rect x="18.0" y="14.100000000000001" width="1.5" height="1.5" fill="#bebebe"/></svg></div>
<div class="a" style="left:601px;top:153px;width:42px;height:40px;background:#4b4b4b;"><svg width="26" height="22" viewBox="0 0 26 22" style="position:absolute;left:8px;top:9px"><path d="M2.5 3.8 Q2.5 2.5 3.8 2.5 L10.5 2.5 L12 4.5 L22.2 4.5 Q23.5 4.5 23.5 5.8 L23.5 19.2 Q23.5 20.5 22.2 20.5 L3.8 20.5 Q2.5 20.5 2.5 19.2 Z" fill="none" stroke="#bebebe" stroke-width="1.6"/><path d="M2.6 3.4 Q2.6 2.2 3.8 2.2 L10.3 2.2 L12.6 5.2 L2.6 5.2Z" fill="#bebebe"/><rect x="8" y="8" width="10" height="10" fill="none" stroke="#bebebe" stroke-width="1.3"/><path d="M8 11 H18 M8 14.5 H13 M13 11 V18" stroke="#bebebe" stroke-width="1.3"/></svg></div>
<div class="a" style="left:601px;top:199px;width:42px;height:40px;background:#4b4b4b;"><svg width="26" height="22" viewBox="0 0 26 22" style="position:absolute;left:8px;top:9px"><path d="M2.5 3.8 Q2.5 2.5 3.8 2.5 L10.5 2.5 L12 4.5 L22.2 4.5 Q23.5 4.5 23.5 5.8 L23.5 19.2 Q23.5 20.5 22.2 20.5 L3.8 20.5 Q2.5 20.5 2.5 19.2 Z" fill="none" stroke="#bebebe" stroke-width="1.6"/><path d="M2.6 3.4 Q2.6 2.2 3.8 2.2 L10.3 2.2 L12.6 5.2 L2.6 5.2Z" fill="#bebebe"/><path d="M8 8 L11.5 11.5 M18 8 L14.5 11.5 M8 18 L11.5 14.5 M18 18 L14.5 14.5 M13 7.5 V10 M13 16 V18.5" stroke="#bebebe" stroke-width="1.6"/></svg></div>
<div class="a" style="left:601px;top:245px;width:42px;height:40px;background:#4b4b4b;"><svg width="26" height="22" viewBox="0 0 26 22" style="position:absolute;left:8px;top:9px"><path d="M2.5 3.8 Q2.5 2.5 3.8 2.5 L10.5 2.5 L12 4.5 L22.2 4.5 Q23.5 4.5 23.5 5.8 L23.5 19.2 Q23.5 20.5 22.2 20.5 L3.8 20.5 Q2.5 20.5 2.5 19.2 Z" fill="none" stroke="#bebebe" stroke-width="1.6"/><path d="M2.6 3.4 Q2.6 2.2 3.8 2.2 L10.3 2.2 L12.6 5.2 L2.6 5.2Z" fill="#bebebe"/><rect x="8" y="8" width="10" height="10" fill="none" stroke="#bebebe" stroke-width="1.3"/><path d="M9.5 16.5 L12 13 L14 15 L16.5 12 V16.5Z" fill="#bebebe"/></svg></div>
<div class="a" style="left:601px;top:291px;width:42px;height:40px;background:#4b4b4b;"><svg width="26" height="22" viewBox="0 0 26 22" style="position:absolute;left:8px;top:9px"><path d="M2.5 3.8 Q2.5 2.5 3.8 2.5 L10.5 2.5 L12 4.5 L22.2 4.5 Q23.5 4.5 23.5 5.8 L23.5 19.2 Q23.5 20.5 22.2 20.5 L3.8 20.5 Q2.5 20.5 2.5 19.2 Z" fill="none" stroke="#bebebe" stroke-width="1.6"/><path d="M2.6 3.4 Q2.6 2.2 3.8 2.2 L10.3 2.2 L12.6 5.2 L2.6 5.2Z" fill="#bebebe"/><path d="M13 7.5 V14" stroke="#bebebe" stroke-width="2"/><path d="M9 12 L13 16.5 L17 12Z" fill="#bebebe"/><path d="M7.5 18 H18.5" stroke="#bebebe" stroke-width="1.5"/></svg></div>
<div class="a" style="left:601px;top:337px;width:42px;height:111px;background:#4b4b4b;">
<svg width="26" height="22" viewBox="0 0 26 22" style="position:absolute;left:8px;top:9px"><path d="M2.5 3.8 Q2.5 2.5 3.8 2.5 L10.5 2.5 L12 4.5 L22.2 4.5 Q23.5 4.5 23.5 5.8 L23.5 19.2 Q23.5 20.5 22.2 20.5 L3.8 20.5 Q2.5 20.5 2.5 19.2 Z" fill="none" stroke="#bebebe" stroke-width="1.6"/><path d="M2.6 3.4 Q2.6 2.2 3.8 2.2 L10.3 2.2 L12.6 5.2 L2.6 5.2Z" fill="#bebebe"/><circle cx="9.5" cy="9.5" r="1.8" fill="#bebebe"/><path d="M7 18.5 V14 Q7 12 9.5 12 Q12 12 12 14 V18.5Z" fill="#bebebe"/><circle cx="16" cy="9.5" r="2.3" fill="none" stroke="#bebebe" stroke-width="1.2"/><path d="M13.5 18.5 Q12.8 13 16 12.5 Q19.2 13 18.5 18.5" fill="none" stroke="#bebebe" stroke-width="1.2"/></svg>
<svg width="26" height="22" viewBox="0 0 26 22" style="position:absolute;left:8px;top:45px"><path d="M2.5 3.8 Q2.5 2.5 3.8 2.5 L10.5 2.5 L12 4.5 L22.2 4.5 Q23.5 4.5 23.5 5.8 L23.5 19.2 Q23.5 20.5 22.2 20.5 L3.8 20.5 Q2.5 20.5 2.5 19.2 Z" fill="none" stroke="#bebebe" stroke-width="1.6"/><path d="M2.6 3.4 Q2.6 2.2 3.8 2.2 L10.3 2.2 L12.6 5.2 L2.6 5.2Z" fill="#bebebe"/><circle cx="9.5" cy="9.5" r="1.8" fill="#bebebe"/><path d="M7 18.5 V14 Q7 12 9.5 12 Q12 12 12 14 V18.5Z" fill="#bebebe"/><circle cx="16" cy="9.5" r="2.3" fill="none" stroke="#bebebe" stroke-width="1.2"/><path d="M13.5 18.5 Q12.8 13 16 12.5 Q19.2 13 18.5 18.5" fill="none" stroke="#bebebe" stroke-width="1.2"/></svg>
<svg width="26" height="22" viewBox="0 0 26 22" style="position:absolute;left:8px;top:81px"><path d="M2.5 3.8 Q2.5 2.5 3.8 2.5 L10.5 2.5 L12 4.5 L22.2 4.5 Q23.5 4.5 23.5 5.8 L23.5 19.2 Q23.5 20.5 22.2 20.5 L3.8 20.5 Q2.5 20.5 2.5 19.2 Z" fill="none" stroke="#bebebe" stroke-width="1.6"/><path d="M2.6 3.4 Q2.6 2.2 3.8 2.2 L10.3 2.2 L12.6 5.2 L2.6 5.2Z" fill="#bebebe"/><circle cx="13" cy="8.5" r="1.8" fill="#bebebe"/><path d="M7 11 L19 11 L15 13 V19 L13 16 L11 19 V13Z" fill="#bebebe"/></svg>
</div><!-- right dark area -->
<div class="a" style="left:648px;top:0;width:128px;height:888px;background:#2d2d2d;"></div>
<div class="a" style="left:648px;top:313px;width:9px;height:228px;background:#333;"></div>
<!-- color slider panel -->
<div class="a" style="left:648px;top:205px;width:128px;height:78px;background:#484848;"></div>
<svg class="a" style="left:648px;top:205px" width="128" height="78">
 <rect x="5.5" y="7.5" width="130" height="16" fill="#535353" stroke="#747474" stroke-width="1"/>
 <path d="M6 23 L128 12 L128 23Z" fill="#353535"/>
 <rect x="5.5" y="32.5" width="130" height="16" fill="#535353" stroke="#747474" stroke-width="1"/>
 <path d="M6 33 C20 42 30 48 38 48 L62 48 C80 48 90 33 100 33 L122 33 C125 33 127 35 128 36 L128 48 L6 48Z" fill="#353535"/>
 <path d="M5 73.8 L6.5 69.5 L13.8 62.2 L16.8 65.2 L9.5 72.5 Z" fill="none" stroke="#c4c4c4" stroke-width="1.1" stroke-linejoin="round"/>
<path d="M12.3 60 L18.6 66.3" stroke="#c4c4c4" stroke-width="2.2"/>
<path d="M17.2 60.8 L20.2 57.8" stroke="#c4c4c4" stroke-width="3.6" stroke-linecap="round"/>
</svg>
<!-- navigator tab bar -->
<div class="a" style="left:648px;top:283px;width:128px;height:4px;background:#363636;"></div>
<div class="a" style="left:648px;top:287px;width:128px;height:26px;background:#474747;"></div>
<div class="a" style="left:648px;top:287px;width:23px;height:20px;background:#3c3c3c;"></div>
<svg class="a" style="left:653px;top:291px" width="12" height="12"><path d="M1 1.5H11M1 6H11M1 10.5H11" stroke="#9a9a9a" stroke-width="1"/></svg>
<div class="a" style="left:671px;top:288px;width:93px;height:19px;background:#4b4b4b;"></div>
<div class="a" style="left:764px;top:287px;width:1px;height:20px;background:#3a3a3a;"></div>
<div class="a" style="left:765px;top:288px;width:11px;height:19px;background:#4b4b4b;"></div>
<svg class="a" style="left:679px;top:292px" width="20" height="18"><rect x="4.5" y="1.5" width="13" height="10" rx="2" fill="#8a8a8a" stroke="#bdbdbd" stroke-width="1.3"/><path d="M1.5 5 V13.5 Q1.5 15.5 3.5 15.5 H14" fill="none" stroke="#bdbdbd" stroke-width="1.3"/></svg>
<div class="a" style="left:707px;top:293px;font-size:12.5px;color:#d8d8d8;line-height:16px;">Navigator</div>
<div class="a" style="left:657px;top:313px;width:119px;height:228px;background:#000;"></div>
<!-- nav slider panel -->
<div class="a" style="left:648px;top:541px;width:128px;height:53px;background:#484848;"></div>
<svg class="a" style="left:648px;top:541px" width="128" height="53">
 <rect x="5.5" y="7.5" width="130" height="16" fill="#535353" stroke="#747474" stroke-width="1"/>
 <path d="M6 23 L128 12 L128 23Z" fill="#353535"/>
 <rect x="5.5" y="32.5" width="130" height="16" fill="#535353" stroke="#747474" stroke-width="1"/>
 <path d="M6 33 C20 42 30 48 38 48 L62 48 C80 48 90 33 100 33 L122 33 C125 33 127 35 128 36 L128 48 L6 48Z" fill="#353535"/>
 <rect x="65.5" y="3.5" width="4" height="24" rx="1" fill="#5a5a5a" stroke="#7a7a7a"/>
 <rect x="77.5" y="28.5" width="4" height="23" rx="1" fill="#5a5a5a" stroke="#7a7a7a"/>
</svg>
<!-- layer tab bar -->
<div class="a" style="left:648px;top:594px;width:128px;height:4px;background:#363636;"></div>
<div class="a" style="left:648px;top:598px;width:128px;height:20px;background:#474747;"></div>
<div class="a" style="left:648px;top:598px;width:23px;height:20px;background:#3c3c3c;"></div>
<svg class="a" style="left:653px;top:602px" width="12" height="12"><path d="M1 1.5H11M1 6H11M1 10.5H11" stroke="#9a9a9a" stroke-width="1"/></svg>
<div class="a" style="left:671px;top:599px;width:68px;height:19px;background:#4b4b4b;"></div>
<div class="a" style="left:739px;top:598px;width:2px;height:20px;background:#3a3a3a;"></div>
<div class="a" style="left:741px;top:599px;width:35px;height:19px;background:#474747;"></div>
<svg class="a" style="left:679px;top:602px" width="20" height="21"><path d="M9.5 1.5 L17 6 L9.5 10.5 L2 6Z" fill="none" stroke="#c0c0c0" stroke-width="1.3"/><path d="M2.5 9.5 L9.5 13.8 L16.5 9.5 M2.5 13 L9.5 17.3 L16.5 13" fill="none" stroke="#c0c0c0" stroke-width="1.3"/></svg>
<div class="a" style="left:707px;top:604px;font-size:12px;color:#d8d8d8;line-height:16px;">Layer</div>
<svg class="a" style="left:749px;top:601px" width="22" height="18"><path d="M2 6 L18 2 L18.5 4 L2.5 8Z" fill="#777"/><rect x="2.5" y="8.5" width="16" height="9" fill="none" stroke="#777" stroke-width="1.3"/><path d="M9 11 L13 13.5 L9 16Z" fill="#777"/></svg>
<!-- layer toolbar -->
<div class="a" style="left:648px;top:618px;width:128px;height:88px;background:#484848;"></div>
<div class="a" style="left:649px;top:624px;width:47px;height:23px;background:#555;border:1px solid #646464;border-radius:2px;"></div>
<div class="a" style="left:654px;top:627px;width:17px;height:15px;border:1.6px solid #a8a8a8;border-radius:3px;"></div>
<svg class="a" style="left:682px;top:631px" width="14" height="10"><path d="M1.5 3 L6 7.5 L10.5 3" fill="none" stroke="#b0b0b0" stroke-width="1.3"/></svg>
<div class="a" style="left:702px;top:624px;width:80px;height:23px;background:#575757;border:1px solid #666;border-radius:2px;"></div>
<div class="a" style="left:730px;top:627px;font-size:14px;color:#e0e0e0;line-height:18px;">Normal</div>
<svg class="a" style="left:727px;top:652px" width="48" height="22">
 <rect x="1" y="6.7" width="12.2" height="13" rx="2" fill="#626262"/>
 <path d="M4.2 5.3 H14.6 V16 H4.2Z" fill="#b4b4b4"/>
 <path d="M5 1.8 H17 Q19 1.8 19 3.8 V14 Q19 16 17 16" fill="none" stroke="#c8c8c8" stroke-width="1.6" stroke-dasharray="2.4 1.5"/>
 <path d="M34.5 6.3 L26.2 2.4 M34.5 6.3 L43.5 2.4 M34.5 6.8 L26.2 10.7 M34.5 6.8 L43.5 10.7" stroke="#cfcfcf" stroke-width="1.4" stroke-linecap="round"/>
 <path d="M32.3 7.4 L37 7.4 L38 19.3 L31.2 19.3Z" fill="#c8c8c8"/>
 <rect x="32.2" y="4" width="4.6" height="4" fill="#484848" stroke="#cfcfcf" stroke-width="1.2"/>
</svg>
<svg class="a" style="left:651px;top:681px" width="20" height="20"><rect x="1.5" y="1.5" width="16" height="16" rx="2" fill="none" stroke="#b8b8b8" stroke-width="1.4"/><path d="M1.5 9.5 H17.5" stroke="#b8b8b8" stroke-width="1.3"/><path d="M4 5 H7 M4 13 H7" stroke="#b8b8b8" stroke-width="1.3"/></svg>
<!-- layer list -->
<div class="a" style="left:648px;top:706px;width:128px;height:182px;background:#3e3e3e;"></div>
<div class="a" style="left:696px;top:744px;width:80px;height:38px;background:#5d6a85;"></div>
<div class="a" style="left:673px;top:706px;width:1px;height:182px;background:#2e2e2e;"></div>
<div class="a" style="left:696px;top:706px;width:1px;height:182px;background:#2e2e2e;"></div>
<div class="a" style="left:715px;top:743px;width:61px;height:1px;background:#2e2e2e;"></div>
<div class="a" style="left:648px;top:782px;width:128px;height:1px;background:#2e2e2e;"></div>
<div class="a" style="left:648px;top:820px;width:128px;height:1px;background:#2e2e2e;"></div>
<div class="a" style="left:648px;top:858px;width:128px;height:1px;background:#2e2e2e;"></div>
<svg class="a" style="left:651px;top:717px" width="22" height="16"><path d="M1.2 10.5 C4 2.5 16 2.5 18.8 10.5" fill="none" stroke="#cdcdcd" stroke-width="2" stroke-linecap="round"/><path d="M3.5 11.5 Q10 15 16.5 11.5" fill="none" stroke="#cdcdcd" stroke-width="0.9"/><circle cx="10" cy="9.3" r="3.7" fill="#cdcdcd"/></svg>
<div class="a" style="left:678px;top:718px;width:12px;height:12px;border:1.5px solid #353535;border-radius:2px;"></div>
<svg class="a" style="left:651px;top:755px" width="22" height="16"><path d="M1.2 10.5 C4 2.5 16 2.5 18.8 10.5" fill="none" stroke="#cdcdcd" stroke-width="2" stroke-linecap="round"/><path d="M3.5 11.5 Q10 15 16.5 11.5" fill="none" stroke="#cdcdcd" stroke-width="0.9"/><circle cx="10" cy="9.3" r="3.7" fill="#cdcdcd"/></svg>
<svg class="a" style="left:651px;top:793px" width="22" height="16"><path d="M1.2 10.5 C4 2.5 16 2.5 18.8 10.5" fill="none" stroke="#cdcdcd" stroke-width="2" stroke-linecap="round"/><path d="M3.5 11.5 Q10 15 16.5 11.5" fill="none" stroke="#cdcdcd" stroke-width="0.9"/><circle cx="10" cy="9.3" r="3.7" fill="#cdcdcd"/></svg>
<div class="a" style="left:678px;top:794px;width:12px;height:12px;border:1.5px solid #353535;border-radius:2px;"></div>
<div class="a" style="left:652px;top:832px;width:12px;height:12px;border:1.5px solid #353535;border-radius:2px;"></div>
<div class="a" style="left:678px;top:832px;width:12px;height:12px;border:1.5px solid #353535;border-radius:2px;"></div>
<svg class="a" style="left:651px;top:869px" width="22" height="16"><path d="M1.2 10.5 C4 2.5 16 2.5 18.8 10.5" fill="none" stroke="#cdcdcd" stroke-width="2" stroke-linecap="round"/><path d="M3.5 11.5 Q10 15 16.5 11.5" fill="none" stroke="#cdcdcd" stroke-width="0.9"/><circle cx="10" cy="9.3" r="3.7" fill="#cdcdcd"/></svg>
<div class="a" style="left:678px;top:870px;width:12px;height:12px;border:1.5px solid #353535;border-radius:2px;"></div>
<svg class="a" style="left:698px;top:722px" width="16" height="12"><path d="M2 3 L7.5 9 L13 3" fill="none" stroke="#c8c8c8" stroke-width="1.5"/></svg>
<svg class="a" style="left:720px;top:716px" width="26" height="20"><path d="M1.5 3 Q1.5 1.5 3 1.5 H9 L11 3.5 H19 Q20.5 3.5 20.5 5 V7 H6 L1.5 17Z" fill="#bdbdbd"/><path d="M5.5 8 H23.5 L19.5 18 H1.5Z" fill="#c6c6c6"/></svg>
<div class="a" style="left:754px;top:711px;font-size:13px;line-height:15px;color:#dcdcdc;">100<br>Fold</div>
<svg class="a" style="left:674px;top:754px" width="20" height="20"><path d="M4 14 L14.5 3.5 L17 6 L6.5 16.5 L3.5 17Z" fill="#c8c8c8"/><path d="M2 18.5 H18" stroke="#c8c8c8" stroke-width="1.4"/></svg>
<svg class="a" style="left:723px;top:748px" width="41" height="33"><rect x="0.5" y="0.5" width="39" height="31" fill="#5d6a85" stroke="#d4dae6"/><rect x="2.5" y="3" width="35" height="26" fill="#fff" stroke="#1e1e1e" stroke-width="1.6"/><clipPath id="ck"><rect x="3.5" y="4" width="33" height="24"/></clipPath><g clip-path="url(#ck)"><rect x="4.0" y="9.3" width="4.8" height="4.8" fill="#c9c9c9"/><rect x="4.0" y="18.9" width="4.8" height="4.8" fill="#c9c9c9"/><rect x="8.8" y="4.5" width="4.8" height="4.8" fill="#c9c9c9"/><rect x="8.8" y="14.1" width="4.8" height="4.8" fill="#c9c9c9"/><rect x="8.8" y="23.7" width="4.8" height="4.8" fill="#c9c9c9"/><rect x="13.6" y="9.3" width="4.8" height="4.8" fill="#c9c9c9"/><rect x="13.6" y="18.9" width="4.8" height="4.8" fill="#c9c9c9"/><rect x="18.4" y="4.5" width="4.8" height="4.8" fill="#c9c9c9"/><rect x="18.4" y="14.1" width="4.8" height="4.8" fill="#c9c9c9"/><rect x="18.4" y="23.7" width="4.8" height="4.8" fill="#c9c9c9"/><rect x="23.2" y="9.3" width="4.8" height="4.8" fill="#c9c9c9"/><rect x="23.2" y="18.9" width="4.8" height="4.8" fill="#c9c9c9"/><rect x="28.0" y="4.5" width="4.8" height="4.8" fill="#c9c9c9"/><rect x="28.0" y="14.1" width="4.8" height="4.8" fill="#c9c9c9"/><rect x="28.0" y="23.7" width="4.8" height="4.8" fill="#c9c9c9"/><rect x="32.8" y="9.3" width="4.8" height="4.8" fill="#c9c9c9"/><rect x="32.8" y="18.9" width="4.8" height="4.8" fill="#c9c9c9"/></g></svg>
<div class="a" style="left:770px;top:749px;font-size:13px;line-height:15px;color:#dfe3ea;">1<br>L</div>
<svg class="a" style="left:702px;top:796px" width="12" height="14"><path d="M3 1.5 L8.5 7 L3 12.5" fill="none" stroke="#c8c8c8" stroke-width="1.5"/></svg>
<svg class="a" style="left:721px;top:794px" width="20" height="18"><path d="M0.5 2 Q0.5 0.5 2 0.5 H7.5 L9.5 2.5 H17 Q18.5 2.5 18.5 4 V15 Q18.5 16.5 17 16.5 H2 Q0.5 16.5 0.5 15Z" fill="#bdbdbd"/><path d="M0.5 4.5 H18.5" stroke="#3e3e3e" stroke-width="1"/></svg>
<div class="a" style="left:754px;top:789px;font-size:13px;line-height:15px;color:#dcdcdc;">100<br>Fold</div>
<svg class="a" style="left:702px;top:834px" width="12" height="14"><path d="M3 1.5 L8.5 7 L3 12.5" fill="none" stroke="#c8c8c8" stroke-width="1.5"/></svg>
<svg class="a" style="left:721px;top:832px" width="20" height="18"><path d="M0.5 2 Q0.5 0.5 2 0.5 H7.5 L9.5 2.5 H17 Q18.5 2.5 18.5 4 V15 Q18.5 16.5 17 16.5 H2 Q0.5 16.5 0.5 15Z" fill="#bdbdbd"/><path d="M0.5 4.5 H18.5" stroke="#3e3e3e" stroke-width="1"/></svg>
<div class="a" style="left:754px;top:827px;font-size:13px;line-height:15px;color:#dcdcdc;">100<br>refs</div>
<div class="a" style="left:706px;top:865px;width:34px;height:23px;background:#000;border:1px solid #2a2a2a;"></div>
<div class="a" style="left:750px;top:863px;font-size:13px;line-height:15px;color:#dcdcdc;white-space:nowrap;">100 %<br>Laye</div>
</body></html>
